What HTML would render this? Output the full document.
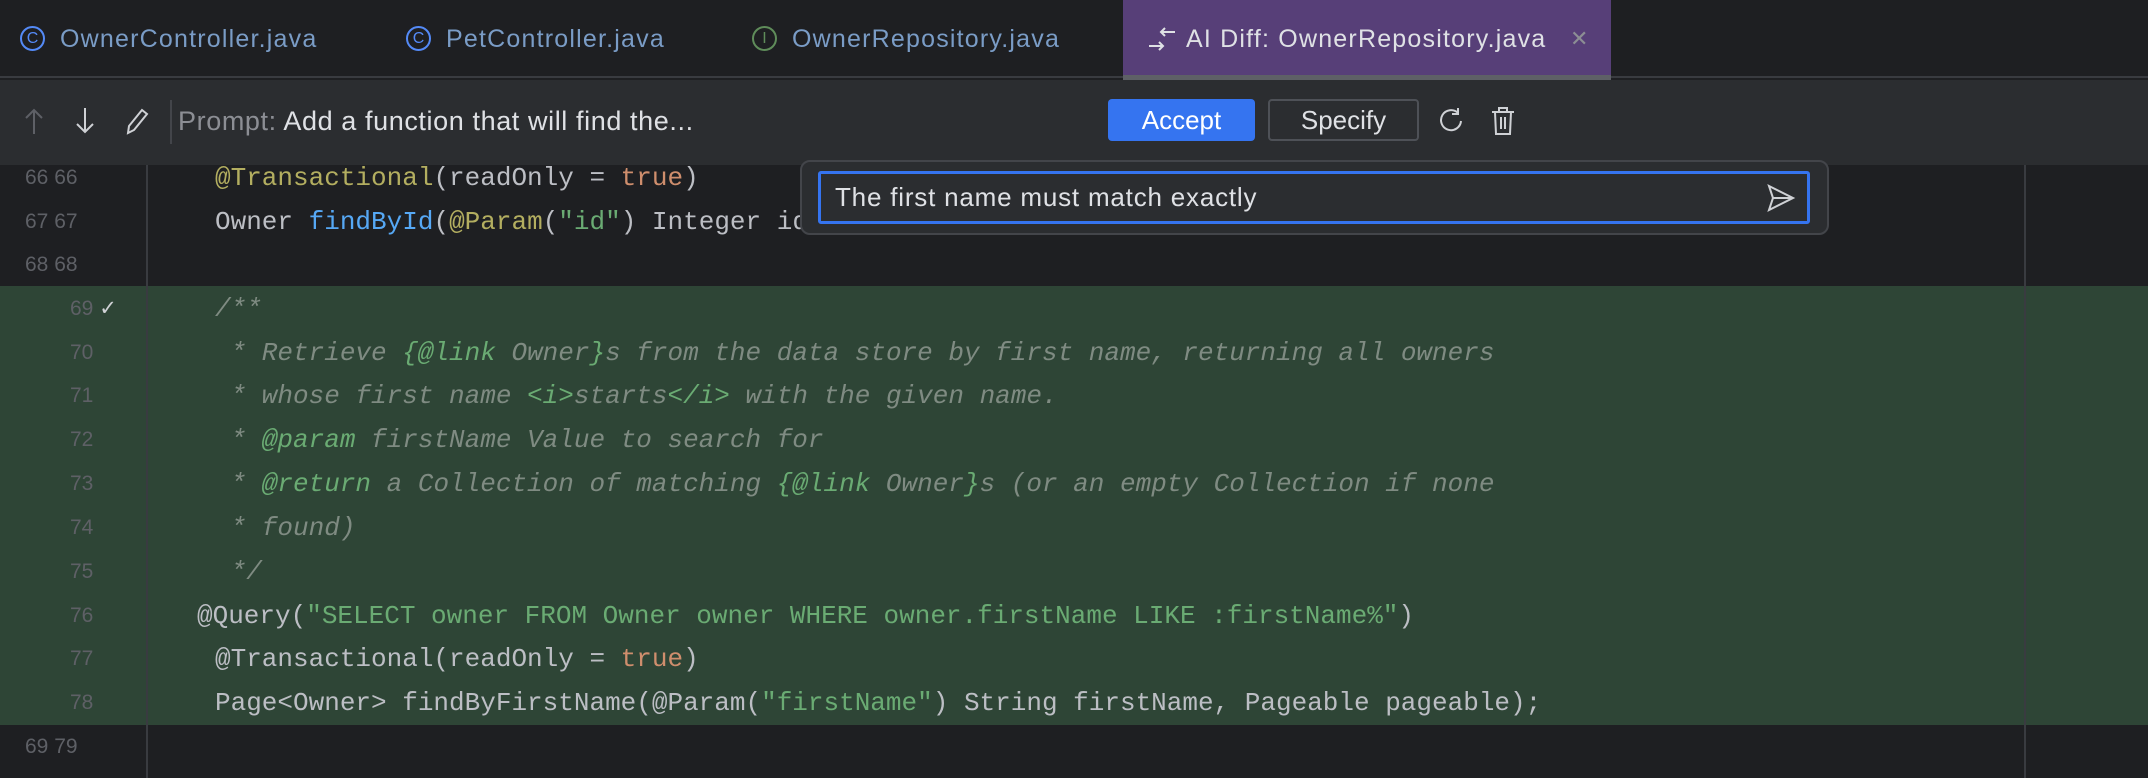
<!DOCTYPE html>
<html><head><style>
*{margin:0;padding:0;box-sizing:border-box}
body{width:2148px;height:778px;background:#1e1f22;position:relative;overflow:hidden;font-family:"Liberation Sans",sans-serif}
.tabs{position:absolute;left:0;top:0;width:2148px;height:78px;background:#1e1f22;border-bottom:2px solid #393b40}
.tab{position:absolute;top:0;height:78px;line-height:78px;font-size:25px;letter-spacing:1.2px;color:#7a9cc6}
.ic{position:absolute;top:26px;width:25px;height:25px;border:2px solid #548af7;border-radius:50%;font-size:16px;line-height:21px;text-align:center;color:#548af7}
.active{position:absolute;left:1123px;top:0;width:488px;height:80px;background:#573f78;border-bottom:5px solid #5e6066}
.tb{position:absolute;left:0;top:80px;width:2148px;height:85px;background:#2b2d30}
.code{position:absolute;left:0;font-family:"Liberation Mono",monospace;font-size:26px;line-height:44px;height:44px;white-space:pre;color:#bcbec4}
.ln{position:absolute;font-family:"Liberation Sans",sans-serif;font-size:21px;line-height:44px;color:#5e6066;white-space:pre}
.c{color:#7f8b82;font-style:italic}
.g{color:#6aab73}.a{color:#b3ae60}.k{color:#cf8e6d}.m{color:#56a8f5}
</style></head><body>
<div class="tabs">
 <div class="ic" style="left:20px">C</div><div class="tab" style="left:60px">OwnerController.java</div>
 <div class="ic" style="left:406px">C</div><div class="tab" style="left:446px">PetController.java</div>
 <div class="ic" style="left:752px;border-color:#5f8c5a;color:#5f8c5a">I</div><div class="tab" style="left:792px">OwnerRepository.java</div>
 <div class="active"></div>
 <svg style="position:absolute;left:1147px;top:24px" width="30" height="30" viewBox="0 0 30 30" fill="none" stroke="#dfe1e5" stroke-width="2"><path d="M2 22h14M12 18l4 4-4 4M28 8H14M18 4l-4 4 4 4"/></svg>
 <div class="tab" style="left:1186px;color:#dfe1e5">AI Diff: OwnerRepository.java</div>
 <div class="tab" style="left:1570px;color:#8c8e94;font-size:22px">✕</div>
</div>
<div class="tb">
 <svg style="position:absolute;left:22px;top:26px" width="24" height="30" viewBox="0 0 24 30" fill="none" stroke="#5e6066" stroke-width="2"><path d="M12 28V4M4 12l8-8 8 8"/></svg>
 <svg style="position:absolute;left:73px;top:26px" width="24" height="30" viewBox="0 0 24 30" fill="none" stroke="#cfd1d5" stroke-width="2"><path d="M12 2v24M4 18l8 8 8-8"/></svg>
 <svg style="position:absolute;left:124px;top:26px" width="26" height="30" viewBox="0 0 26 30" fill="none" stroke="#cfd1d5" stroke-width="2"><path d="M4 27l1-7L18 4l5 4L10 24z"/></svg>
 <div style="position:absolute;left:170px;top:20px;width:2px;height:44px;background:#43454a"></div>
 <div style="position:absolute;left:178px;top:0;line-height:82px;font-size:27px;letter-spacing:0.6px;color:#8c8e94;white-space:nowrap">Prompt: <span style="color:#dfe1e5">Add a function that will find the...</span></div>
 <div style="position:absolute;left:1108px;top:19px;width:147px;height:42px;background:#3574f0;border-radius:4px;color:#fff;font-size:26px;line-height:42px;text-align:center">Accept</div>
 <div style="position:absolute;left:1268px;top:19px;width:151px;height:42px;border:2px solid #4e5157;border-radius:4px;color:#dfe1e5;font-size:26px;line-height:38px;text-align:center">Specify</div>
 <svg style="position:absolute;left:1436px;top:26px" width="30" height="30" viewBox="0 0 30 30" fill="none" stroke="#cfd1d5" stroke-width="2"><path d="M22 7A10 10 0 1 0 25 15M22 2v6h-6"/></svg>
 <svg style="position:absolute;left:1488px;top:24px" width="30" height="34" viewBox="0 0 30 34" fill="none" stroke="#cfd1d5" stroke-width="2"><path d="M4 8h22M11 8V4h8v4M7 8l1 22h14l1-22M13 13v12M17 13v12"/></svg>
</div>
<!-- editor -->
<div style="position:absolute;left:0;top:286px;width:2148px;height:439px;background:#2e4536"></div>
<div style="position:absolute;left:146px;top:165px;width:2px;height:613px;background:#393b40"></div>
<div style="position:absolute;left:2024px;top:165px;width:2px;height:613px;background:#393b40"></div>
<div class="ln" style="left:25px;top:156px">66 66</div><div class="code" style="left:215px;top:156px"><span class="a">@Transactional</span>(readOnly = <span class="k">true</span>)</div>
<div class="ln" style="left:25px;top:200px">67 67</div><div class="code" style="left:215px;top:200px">Owner <span class="m">findById</span>(<span class="a">@Param</span>(<span class="g">"id"</span>) Integer id</div>
<div class="ln" style="left:25px;top:243px">68 68</div>
<div class="ln" style="left:70px;top:287px">69<span style="color:#cfd1d5"> ✓</span></div><div class="code c" style="left:215px;top:287px">/**</div>
<div class="ln" style="left:70px;top:331px">70</div><div class="code c" style="left:215px;top:331px"> * Retrieve <span class="g">{@link</span> Owner<span class="g">}</span>s from the data store by first name, returning all owners</div>
<div class="ln" style="left:70px;top:374px">71</div><div class="code c" style="left:215px;top:374px"> * whose first name <span class="g">&lt;i&gt;</span>starts<span class="g">&lt;/i&gt;</span> with the given name.</div>
<div class="ln" style="left:70px;top:418px">72</div><div class="code c" style="left:215px;top:418px"> * <span class="g">@param</span> firstName Value to search for</div>
<div class="ln" style="left:70px;top:462px">73</div><div class="code c" style="left:215px;top:462px"> * <span class="g">@return</span> a Collection of matching <span class="g">{@link</span> Owner<span class="g">}</span>s (or an empty Collection if none</div>
<div class="ln" style="left:70px;top:506px">74</div><div class="code c" style="left:215px;top:506px"> * found)</div>
<div class="ln" style="left:70px;top:550px">75</div><div class="code c" style="left:215px;top:550px"> */</div>
<div class="ln" style="left:70px;top:594px">76</div><div class="code" style="left:197px;top:594px">@Query(<span class="g">"SELECT owner FROM Owner owner WHERE owner.firstName LIKE :firstName%"</span>)</div>
<div class="ln" style="left:70px;top:637px">77</div><div class="code" style="left:215px;top:637px">@Transactional(readOnly = <span class="k">true</span>)</div>
<div class="ln" style="left:70px;top:681px">78</div><div class="code" style="left:215px;top:681px">Page&lt;Owner&gt; findByFirstName(@Param(<span class="g">"firstName"</span>) String firstName, Pageable pageable);</div>
<div class="ln" style="left:25px;top:725px">69 79</div>
<!-- popup -->
<div style="position:absolute;left:800px;top:160px;width:1029px;height:75px;background:#2b2d30;border:2px solid #43454a;border-radius:10px"></div>
<div style="position:absolute;left:818px;top:171px;width:992px;height:53px;border:3px solid #3574f0;border-radius:3px;font-size:26px;letter-spacing:0.8px;line-height:47px;color:#dfe1e5;padding-left:14px;white-space:nowrap">The first name must match exactly</div>
<svg style="position:absolute;left:1766px;top:184px" width="30" height="28" viewBox="0 0 30 28" fill="none" stroke="#cfd1d5" stroke-width="2"><path d="M3 2l24 12L3 26l4-12zM7 14h20"/></svg>
</body></html>
